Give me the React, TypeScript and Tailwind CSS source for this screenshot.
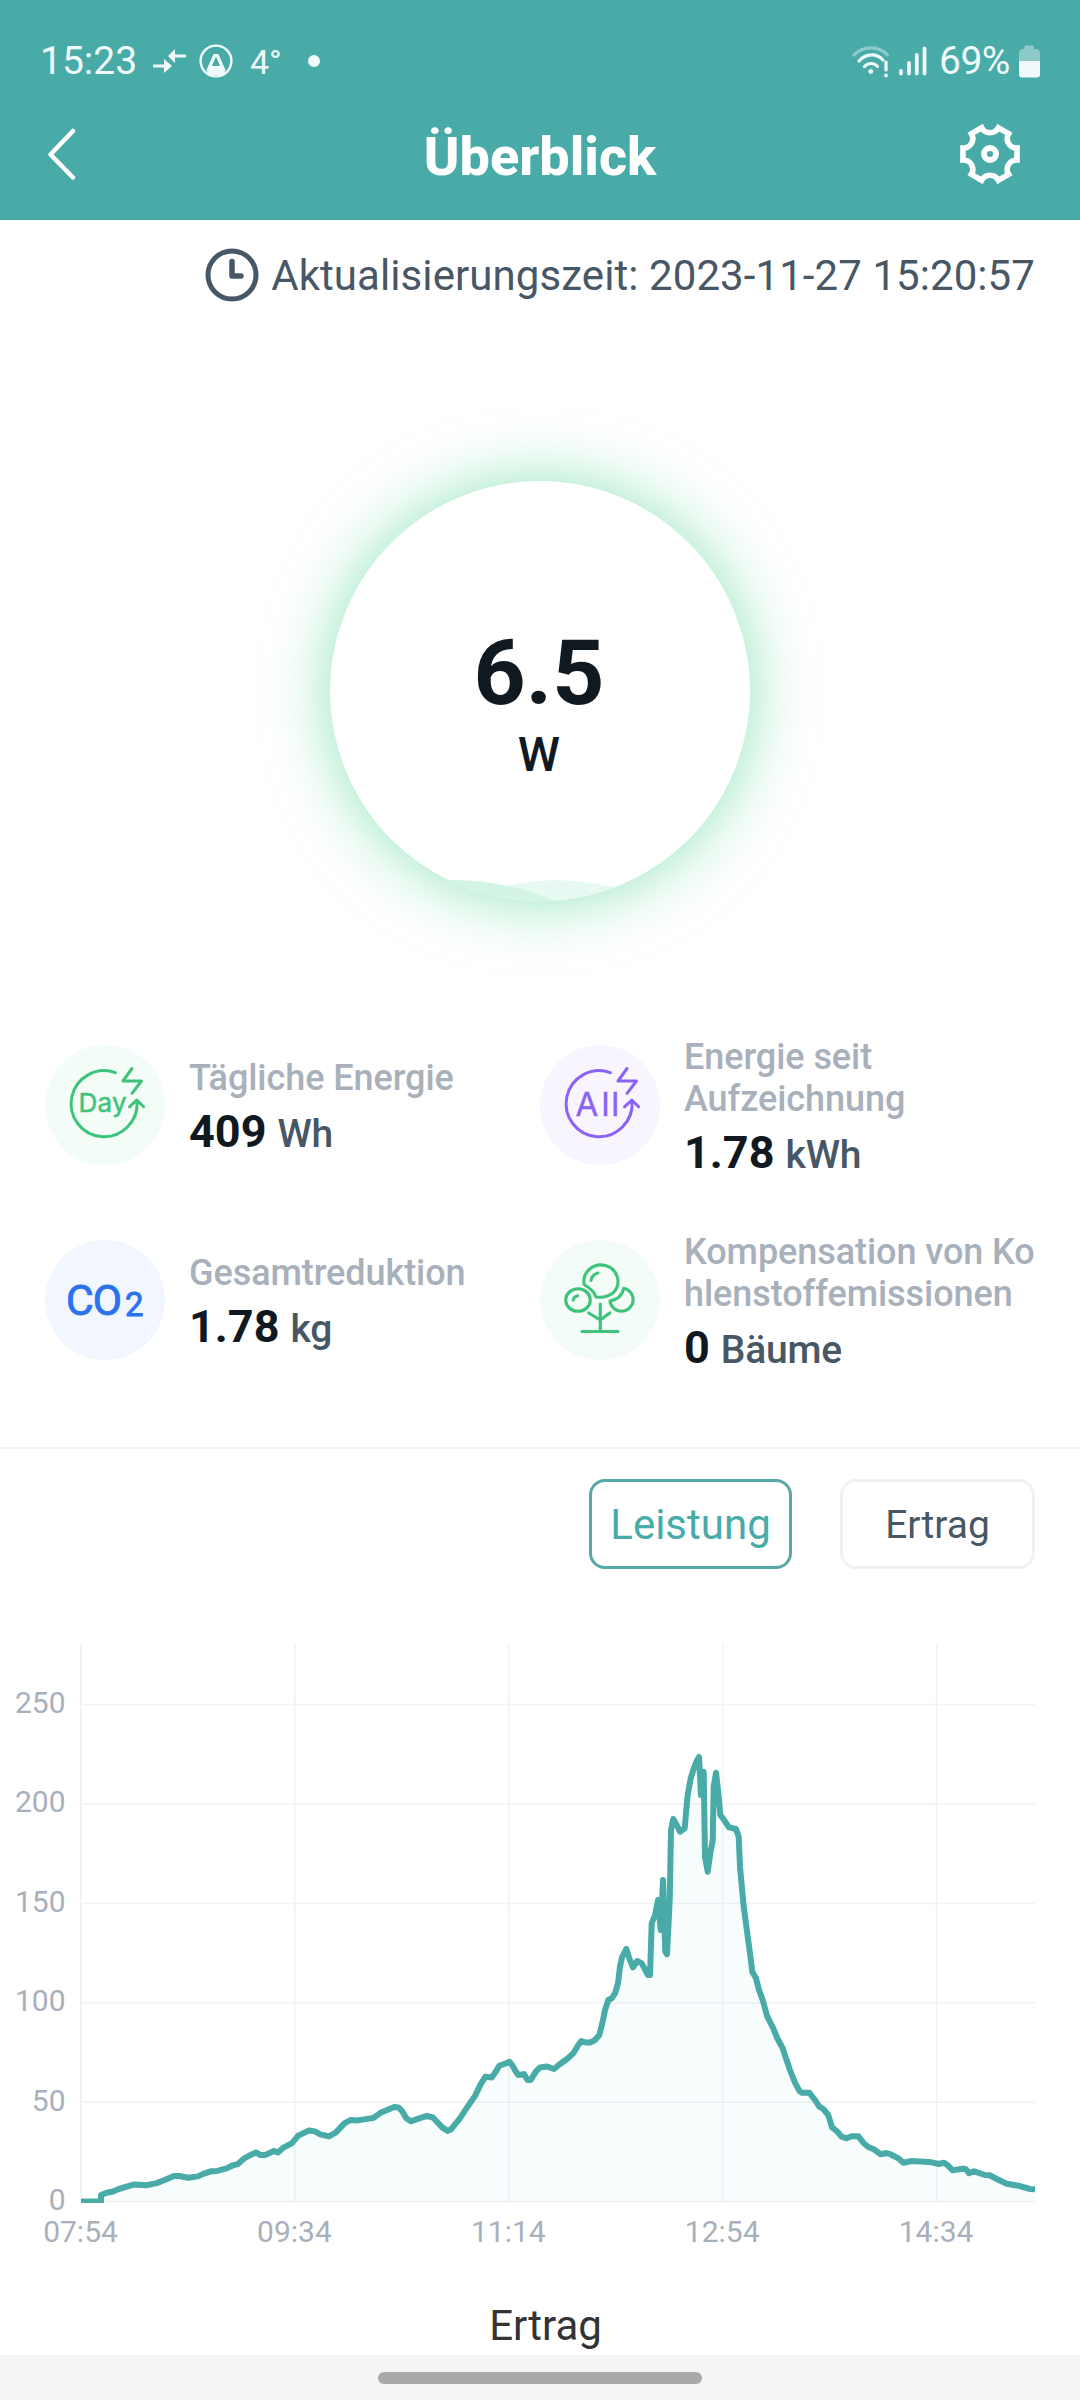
import React from 'react';

const GearIcon = () => (
  <svg width="60" height="60" viewBox="0 0 60 60" fill="none" stroke="#fff">
    <path
      strokeWidth="5.6"
      d="M57 36V24A9.4 9.4 0 0 1 48.65 9.65L38.3 3.7A9.4 9.4 0 0 1 21.7 3.7L11.35 9.65A9.4 9.4 0 0 1 3 24V36A9.4 9.4 0 0 1 11.35 50.35L21.7 56.3A9.4 9.4 0 0 1 38.3 56.3L48.65 50.35A9.4 9.4 0 0 1 57 36Z"
    />
    <circle cx="30" cy="30" r="6" strokeWidth="6" />
  </svg>
);

const StatusBar = () => (
  <div className="flex h-[122px] items-center justify-between pl-[40px] pr-[40px] text-[#f0fafa]">
    <div className="flex items-center">
      <span className="mt-[1px] w-[113px] text-[39px] leading-none">15:23</span>
      <svg width="34" height="24" viewBox="0 0 34 24" fill="currentColor">
        <path d="M0 15.5H11V10L19 17L11 24V18.5H0Z" />
        <path d="M33 5.5H22V0L15 7L22 14V8.5H33Z" />
      </svg>
      <svg className="ml-[12px]" width="34" height="34" viewBox="0 0 34 34">
        <circle cx="17" cy="17" r="15.4" fill="none" stroke="currentColor" strokeWidth="2.4" />
        <path d="M14.6 10H19.4L26.5 26L24 31H10L7.5 26Z" fill="currentColor" />
        <path d="M17 12.6L21 22H13Z" fill="#48aba8" />
      </svg>
      <span className="ml-[17px] mt-[2px] w-[46px] text-[34px] leading-none">4°</span>
      <span className="ml-[12px] h-3 w-3 rounded-full bg-[#f0fafa]" />
    </div>
    <div className="flex items-center">
      <svg width="38" height="34" viewBox="0 0 38 34" fill="none" stroke="currentColor" strokeWidth="3.2" strokeLinecap="round">
        <path d="M2 11C11 1.500 27 1.500 35.500 11" opacity="0.4" />
        <path d="M7 17C14 9 25 9 31 16" />
        <path d="M12.500 22.500C16 18.500 22 18.500 25.500 22.500" />
        <circle cx="18.800" cy="27.500" r="2.400" fill="currentColor" stroke="none" />
        <path d="M34 18V26" />
        <path d="M34 31.500V31.600" strokeWidth="3.800" />
      </svg>
      <svg className="ml-[9px]" width="30" height="30" viewBox="0 0 30 30" stroke="currentColor" strokeWidth="3.800" strokeLinecap="round">
        <path d="M2 25V27.500M10 17V27.500M17.800 9V27.500M25.500 2.500V27.500" />
      </svg>
      <span className="ml-[10px] mt-[1px] w-[80px] text-[39px] leading-none tracking-[-0.5px]">69%</span>
      <svg width="21" height="33" viewBox="0 0 21 33" fill="currentColor">
        <path d="M5.500 4V2Q5.500 0.500 7 0.500H13.500Q15 0.500 15 2V4H17.500Q21 4.500 21 8V16H0V8Q0 4.500 3.500 4Z" opacity="0.4" />
        <path d="M0 16H21V29.500Q21 32.500 18 32.500H3Q0 32.500 0 29.500Z" />
      </svg>
    </div>
  </div>
);

const Header = () => (
  <header className="h-[220px] bg-[#48aba8] text-white">
    <StatusBar />
    <div className="flex h-[64px] items-center justify-between pl-[46px] pr-[60px]">
      <svg className="mr-[14px]" width="60" height="56" viewBox="0 0 60 56" fill="none" stroke="#fff" strokeWidth="4.500" strokeLinecap="round" strokeLinejoin="round">
        <path d="M27 5L4.500 28.500L27 51.500" />
      </svg>
      <h1 className="mt-[5px] text-[54px] font-extrabold leading-none">Überblick</h1>
      <GearIcon />
    </div>
  </header>
);

const UpdateTime = () => (
  <div className="flex h-[110px] items-center justify-end pr-[45px] text-[42px] text-[#485765]">
    <svg className="mr-[12px]" width="54" height="54" viewBox="0 0 54 54" fill="none" stroke="currentColor">
      <circle cx="27" cy="27" r="24" strokeWidth="5" />
      <path d="M27 13.500V28H36" strokeWidth="5.500" strokeLinecap="round" strokeLinejoin="round" />
    </svg>
    <span className="mt-[2px] leading-none tracking-[0.08px]">Aktualisierungszeit: 2023-11-27 15:20:57</span>
  </div>
);

const PowerGauge = () => (
  <div className="mx-auto mt-[151px] h-[420px] w-[420px] rounded-full bg-white shadow-[0_0_64px_rgba(72,210,140,0.6)]">
    <div className="relative flex h-full w-full flex-col items-center overflow-hidden rounded-full pt-[147px] text-[#101920]">
      <svg className="absolute inset-0" width="420" height="420" viewBox="0 0 420 420">
        <path d="M150 420Q165 407 177 405Q226 393 285 406V420Z" fill="#e8f9f1" />
        <path d="M105 420V399Q170 396 225 420Z" fill="#d4f4e4" />
      </svg>
      <span className="relative pr-[2px] text-[91px] font-bold leading-[90px]">6.5</span>
      <span className="relative mt-[13px] pr-[2px] text-[48px] font-medium leading-[48px]">W</span>
    </div>
  </div>
);

const CycleMark = () => (
  <g fill="none" strokeWidth="3" strokeLinecap="round" strokeLinejoin="round">
    <path d="M70.400 27.700A33 33 0 1 0 92 56" />
    <path d="M84.500 61.800L91.800 55L98.600 61.800" />
    <path d="M87 23.500L78 36H96.500L87 48.300" />
  </g>
);

const DayIcon = () => (
  <svg className="shrink-0" width="120" height="120" viewBox="0 0 120 120" stroke="#3fc37b">
    <circle cx="60" cy="60" r="60" fill="#f3fcf7" stroke="none" />
    <CycleMark />
    <text x="33.500" y="67.300" fontSize="26" textLength="48" fill="#3fc37b" strokeWidth="0.500" fontFamily="Inter, sans-serif">Day</text>
  </svg>
);

const AllIcon = () => (
  <svg className="shrink-0" width="120" height="120" viewBox="0 0 120 120" stroke="#8a62f5">
    <circle cx="60" cy="60" r="60" fill="#f8f5ff" stroke="none" />
    <CycleMark />
    <text x="35.500 61.500 71.200" y="70.700" fontSize="33" fill="#8a62f5" strokeWidth="0.400" fontFamily="Inter, sans-serif">All</text>
  </svg>
);

const Co2Icon = () => (
  <svg className="shrink-0" width="120" height="120" viewBox="0 0 120 120" fill="#2a72ee" stroke="#2a72ee" strokeWidth="0.900" strokeLinejoin="round">
    <circle cx="60" cy="60" r="60" fill="#f1f6ff" stroke="none" />
    <text x="21 47.800" y="75.300" fontSize="42.500">CO</text>
    <text x="80" y="75.500" fontSize="33">2</text>
  </svg>
);

const TreeIcon = () => (
  <svg className="shrink-0" width="120" height="120" viewBox="0 0 120 120" fill="none" stroke="#3fc37b" strokeWidth="3.100" strokeLinecap="round" strokeLinejoin="round">
    <circle cx="60" cy="60" r="60" fill="#f3fcf7" stroke="none" />
    <path d="M44.200 44.500A17 16.500 0 1 1 73.500 52.500Q66 58.500 56 57Q54 50.500 44.200 44.500Z" />
    <path d="M51 40.500Q52 34.500 58 33" />
    <ellipse cx="38" cy="60" rx="12.300" ry="11.300" />
    <path d="M33.200 60Q34 56.500 37.700 55.700" />
    <path d="M83.700 48.200A11.600 11.600 0 1 1 70 61Q82 58.500 83.700 48.200Z" />
    <path d="M60.300 64V91.300M48.700 73L60.300 80L69.800 73M42 91.500H78" />
  </svg>
);

const stats = [
  { icon: <DayIcon />, label: ['Tägliche Energie'], value: '409', unit: 'Wh' },
  { icon: <AllIcon />, label: ['Energie seit', 'Aufzeichnung'], value: '1.78', unit: 'kWh' },
  { icon: <Co2Icon />, label: ['Gesamtreduktion'], value: '1.78', unit: 'kg' },
  { icon: <TreeIcon />, label: ['Kompensation von Ko', 'hlenstoffemissionen'], value: '0', unit: 'Bäume' },
];

const Stats = () => (
  <div className="mt-[129px] grid grid-cols-2 gap-y-[45px] px-[45px]">
    {stats.map((stat) => (
      <div key={stat.label[0]} className="flex h-[150px] items-center">
        {stat.icon}
        <div className="ml-[24px] mt-[5px] whitespace-nowrap">
          {stat.label.map((line) => (
            <p key={line} className="text-[36px] font-medium leading-[42px] tracking-[-0.06px] text-[#a8b0bb]">{line}</p>
          ))}
          <p className="mt-[8px] text-[45px] font-bold leading-[50px] text-[#101920]">
            {stat.value}
            <span className="ml-[11px] text-[39px] font-medium tracking-[-0.2px] text-[#485765]">{stat.unit}</span>
          </p>
        </div>
      </div>
    ))}
  </div>
);

const Tabs = () => (
  <div className="mt-[72px] flex justify-end gap-[48px] border-t-2 border-[#eff1f2] pr-[45px] pt-[30px]">
    <button className="h-[90px] w-[203px] rounded-2xl border-3 border-[#55a9a6] pt-[2px] text-[42px] leading-none text-[#48aba8]">
      Leistung
    </button>
    <button className="h-[90px] w-[195px] rounded-2xl border-3 border-[#eff1f2] pt-[2px] text-[39px] leading-none text-[#485765]">
      Ertrag
    </button>
  </div>
);

const yTicks = [
  { label: '250', y: 84.6 },
  { label: '200', y: 184 },
  { label: '150', y: 283.4 },
  { label: '100', y: 382.8 },
  { label: '50', y: 482.2 },
  { label: '0', y: 581.6 },
];

const xTicks = [
  { label: '07:54', x: 81 },
  { label: '09:34', x: 294.9 },
  { label: '11:14', x: 508.8 },
  { label: '12:54', x: 722.7 },
  { label: '14:34', x: 936.6 },
];

const power =
  '81,581.6 101,581.6 101,575 106.7,572.8 113,571.5 118.8,569 134.3,564.4 146.3,565.2 156.7,563.1 165.3,559.8 173.9,556 179,556 188.4,557.7 198,556.4 203.2,553.9 210.7,551.3 217,550.9 226.6,548.4 232.4,545.5 237.6,544.2 243.8,538.7 249.7,535.4 255.9,532.4 260,534.9 265.2,534.9 273.8,531.1 278.2,532.4 283,527.8 292,523.1 298.2,515.6 308.9,510.5 315,511.4 320.2,514.3 328.9,516.4 335.7,512.6 344.4,503.4 350.5,500 357.4,500.4 373.6,497.9 380.5,492.8 394.3,486.9 398.4,487.4 402.2,491.2 406.3,498.3 410.8,501.3 418.4,498.7 427,495.8 432.9,497.5 442.5,507.6 447.7,510.9 451,509.3 459.7,498.7 466.6,488.2 475.2,475.6 480.4,464.6 485.5,456.6 491.7,457.5 495.9,451.6 499.3,445.7 506.2,443.2 509.6,441.9 512.4,445.3 515.8,451.6 518.3,455 524,454.1 527.5,460 530.7,460 535.8,451.6 540,447.4 547,446.5 554,449 560,444 567,439 573.3,433.3 578.3,425 581.3,421 585,422.3 590,422.7 595,420 599.3,415 602.3,403.3 605,390 608.3,380 611.7,378.3 615,373.3 618,363.3 620,346.7 622,337.3 626.3,329 629.3,338.3 633,347.3 637.3,341 641.7,343.3 648,355 650,355 651.7,303.3 655,295 658,280 660.7,310 663,260 665.3,331.7 667,334.3 669.7,280 671,210 673.3,199 676.7,205 680,211.7 684.7,208.3 686,193.3 687.7,175 690.7,158.3 693.3,150 696.3,141.7 699,137 701,175 703.7,151.7 705,236.7 707.7,251.7 710.3,233.3 712.7,220 713.7,166.7 716,152.7 718.7,176.7 720.3,195 723,198.3 729,207.3 736,209 738.7,216.7 740,246.7 743.7,286.7 750,333.3 752.3,351.7 756,358.3 759,370 762.7,380 767.3,396.7 773.3,408.3 777.3,418.3 782.7,428.3 786.3,439.3 790,450 795,462.7 799.3,470.7 801.7,472.7 809.3,472.7 815,480 819.3,486.7 823.3,489 828.3,495 832,507.3 836.7,511 841.7,516.7 846.7,518.3 851.7,516.3 858.3,516.3 863.3,522.7 868.3,527 873.3,529 880.7,534.3 886.7,533 890,534 898.3,538.3 903.3,542.7 911.7,541 925,541.7 931.7,542.3 939,544 944,542.7 947.3,545 952.7,550.3 962.7,548.7 966,549.3 969,553.3 974,551.3 985,555 990,555.3 996.7,559 1006.7,563.7 1018.3,565.7 1030,569 1035,569.3';

const PowerChart = () => (
  <svg className="mt-[51px] block" width="1080" height="640" viewBox="0 0 1080 640">
    <clipPath id="plot">
      <rect x="81" y="24" width="954" height="559" />
    </clipPath>
    <g stroke="#f1f2f3" strokeWidth="1.500">
      {yTicks.map((t) => (
        <line key={t.label} x1="81" x2="1035" y1={t.y} y2={t.y} />
      ))}
      {xTicks.map((t) => (
        <line key={t.label} x1={t.x} x2={t.x} y1="24" y2="582" />
      ))}
      <line x1="81" x2="81" y1="24" y2="582" strokeWidth="2" />
    </g>
    <g clipPath="url(#plot)">
      <polygon points={`${power} 1035,581.6`} fill="rgba(60,190,190,0.04)" />
      <polyline points={power} fill="none" stroke="#48aba8" strokeWidth="6" strokeLinejoin="round" />
    </g>
    <g fill="#a8b0bb" fontSize="30">
      {yTicks.map((t) => (
        <text key={t.label} x="65.500" y={t.y + 8.4} textAnchor="end">{t.label}</text>
      ))}
      {xTicks.map((t) => (
        <text key={t.label} x={t.x - 0.5} y="621.500" textAnchor="middle">{t.label}</text>
      ))}
    </g>
  </svg>
);

export default function App() {
  return (
    <div className="flex h-[2400px] w-[1080px] flex-col overflow-hidden bg-white font-[Roboto,sans-serif]">
      <Header />
      <UpdateTime />
      <PowerGauge />
      <Stats />
      <Tabs />
      <PowerChart />
      <h2 className="mt-[41px] pl-[11px] text-center text-[42px] leading-[50px] text-[#333]">Ertrag</h2>
      <footer className="mt-auto flex h-[45px] shrink-0 items-center justify-center bg-[#f5f5f5]">
        <div className="h-3 w-[324px] rounded-full bg-[#a9a9a9]" />
      </footer>
    </div>
  );
}
